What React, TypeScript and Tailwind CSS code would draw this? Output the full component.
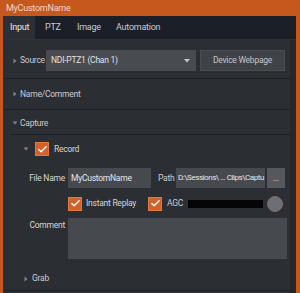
import { Check } from 'lucide-react';

const Arrow = ({ open = false }: { open?: boolean }) => (
  <svg width="6" height="6" viewBox="0 0 6 6" className="shrink-0">
    {open ? <path d="M0.5 1.5 L5.5 1.5 L3 4.5 Z" fill="#80848a" /> : <path d="M1.5 0.5 L4.5 3 L1.5 5.5 Z" fill="#80848a" />}
  </svg>
);

const CheckBox = () => (
  <div className="w-[14px] h-[14px] bg-[#d2622a] border border-[#e07a42] flex items-center justify-center shrink-0">
    <Check size={11} strokeWidth={3} color="#ffffff" />
  </div>
);

const Separator = ({ inset = false }: { inset?: boolean }) => (
  <div className={inset ? 'h-px bg-[#1e2125] ml-[7px]' : 'h-px bg-[#1e2125]'} />
);

const tabs = [
  { label: 'Input', className: 'w-[32px] pl-[7px] bg-[#2c3036] text-[#e6e6e6]' },
  { label: 'PTZ', className: 'w-[31px] pl-[10px] text-[#c9cbce]' },
  { label: 'Image', className: 'w-[39px] pl-[11px] text-[#c9cbce]' },
  { label: 'Automation', className: 'w-[60px] pl-[11px] text-[#c9cbce]' },
];

export default function App() {
  return (
    <div className="w-[300px] h-[293px] bg-[#c6581d] flex flex-col overflow-hidden font-['Roboto',sans-serif] text-[8.5px] tracking-[-0.25px]">
      <div className="h-[16px] pl-[6px] leading-[16px] text-[#f7d6c2] text-[9px]">MyCustomName</div>
      <div className="flex-1 ml-[3px] mr-[4px] flex flex-col bg-[#2b2e33] min-h-0">
        <div className="h-[24px] bg-[#1b1f27] flex items-stretch border-b border-[#2f3339] text-[9px]">
          {tabs.map((tab) => (
            <div key={tab.label} className={`flex items-center whitespace-nowrap ${tab.className}`}>
              {tab.label}
            </div>
          ))}
        </div>

        <div className="flex-1 flex min-h-0">
          <div className="flex-1 flex flex-col">
            {/* Source */}
            <div className="mt-[10px] h-[21px] flex items-center">
              <div className="ml-[9px] w-[8px]">
                <Arrow />
              </div>
              <span className="w-[26px] text-[#c9cbce]">Source</span>
              <div className="w-[150px] h-full bg-[#484b50] flex items-center justify-between pl-[5px] pr-[6px] text-[#e2e2e2]">
                <span>NDI-PTZ1 (Chan 1)</span>
                <svg width="6" height="4" viewBox="0 0 6 4">
                  <path d="M0 0 L6 0 L3 3.5 Z" fill="#c8c8c8" />
                </svg>
              </div>
              <div className="ml-[4px] w-[85px] h-full bg-[#3f4247] border border-[#4a4d52] flex items-center justify-center text-[#c2c4c7]">
                Device Webpage
              </div>
            </div>
            <div className="h-[7px]" />
            <Separator />

            {/* Name/Comment */}
            <div className="h-[30px] flex items-center">
              <div className="ml-[9px] w-[8px]">
                <Arrow />
              </div>
              <span className="text-[#c9cbce]">Name/Comment</span>
            </div>
            <Separator />

            {/* Capture */}
            <div className="h-[24px] flex items-center pt-[2px]">
              <div className="ml-[9px] w-[8px]">
                <Arrow open />
              </div>
              <span className="text-[#c9cbce]">Capture</span>
            </div>
            <Separator inset />

            {/* Record */}
            <div className="h-[28px] flex items-center">
              <div className="ml-[20px] w-[12px]">
                <Arrow open />
              </div>
              <CheckBox />
              <span className="ml-[5px] text-[#d4d6d8]">Record</span>
            </div>

            {/* File Name / Path */}
            <div className="mt-[5px] h-[20px] flex items-center">
              <span className="w-[62px] text-right text-[#d4d6d8]">File Name</span>
              <div className="ml-[3px] w-[83px] h-full bg-[#46494e] flex items-center pl-[3px] text-[#e6e6e6] overflow-hidden whitespace-nowrap">
                MyCustomName
              </div>
              <span className="ml-[7px] w-[18px] text-[#c9cbce]">Path</span>
              <div className="w-[89px] h-full bg-[#46494e] flex items-center pl-[2px] text-[#e6e6e6] text-[8px] tracking-[-0.45px] overflow-hidden whitespace-nowrap">
                D:\Sessions\ ... Clips\Captu
              </div>
              <div className="ml-[2px] w-[18px] h-full bg-[#55585d] flex items-center justify-center text-[#e6e6e6]">
                ...
              </div>
            </div>

            {/* Instant Replay / AGC */}
            <div className="mt-[8px] h-[15px] flex items-center">
              <div className="ml-[65px] w-[80px] flex items-center">
                <CheckBox />
                <span className="ml-[4px] text-[#d4d6d8]">Instant Replay</span>
              </div>
              <CheckBox />
              <span className="ml-[5px] w-[21px] text-[#c9cbce]">AGC</span>
              <div className="w-[75px] h-[8px] bg-[#050505]" />
              <div className="ml-[4px] w-[16px] h-[16px] rounded-full bg-[#6c6f74] border border-[#8a6a58]" />
            </div>

            {/* Comment */}
            <div className="mt-[7px] flex items-start">
              <span className="w-[62px] text-right text-[#d4d6d8] mt-[1px]">Comment</span>
              <div className="ml-[3px] w-[219px] h-[41px] bg-[#46494e]" />
            </div>

            {/* Grab */}
            <div className="h-[31px] pt-[8px] flex items-center">
              <div className="ml-[20px] w-[9px]">
                <Arrow />
              </div>
              <span className="text-[#c9cbce]">Grab</span>
            </div>
            <div className="h-px bg-[#1e2125]" />
          </div>
          <div className="w-[6px] bg-[#24272c]" />
        </div>
      </div>
    </div>
  );
}
